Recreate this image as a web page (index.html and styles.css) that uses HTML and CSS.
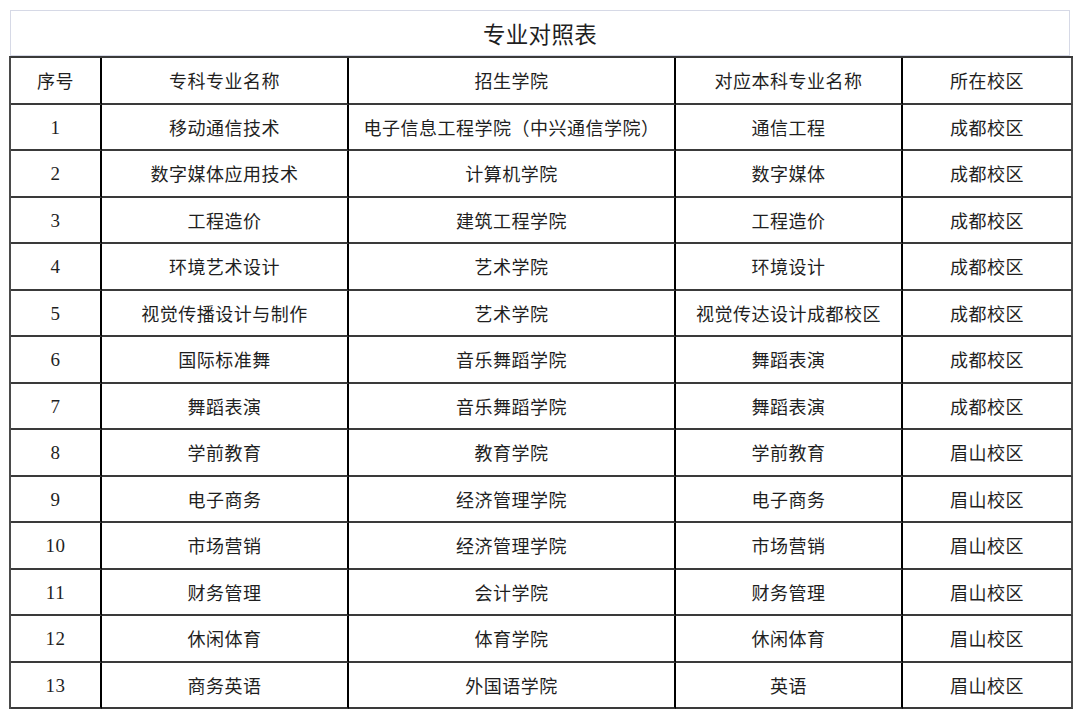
FILE: index.html
```html
<!DOCTYPE html>
<html lang="zh">
<head>
<meta charset="utf-8">
<title>专业对照表</title>
<link rel="stylesheet" href="styles.css">
</head>
<body>
<div class="sheet">
  <div class="caption">专业对照表</div>
  <table class="grid">
    <colgroup>
      <col class="c1"><col class="c2"><col class="c3"><col class="c4"><col class="c5">
    </colgroup>
    <thead>
      <tr><th>序号</th><th>专科专业名称</th><th>招生学院</th><th>对应本科专业名称</th><th>所在校区</th></tr>
    </thead>
    <tbody>
      <tr><td>1</td><td>移动通信技术</td><td>电子信息工程学院（中兴通信学院）</td><td>通信工程</td><td>成都校区</td></tr>
      <tr><td>2</td><td>数字媒体应用技术</td><td>计算机学院</td><td>数字媒体</td><td>成都校区</td></tr>
      <tr><td>3</td><td>工程造价</td><td>建筑工程学院</td><td>工程造价</td><td>成都校区</td></tr>
      <tr><td>4</td><td>环境艺术设计</td><td>艺术学院</td><td>环境设计</td><td>成都校区</td></tr>
      <tr><td>5</td><td>视觉传播设计与制作</td><td>艺术学院</td><td>视觉传达设计成都校区</td><td>成都校区</td></tr>
      <tr><td>6</td><td>国际标准舞</td><td>音乐舞蹈学院</td><td>舞蹈表演</td><td>成都校区</td></tr>
      <tr><td>7</td><td>舞蹈表演</td><td>音乐舞蹈学院</td><td>舞蹈表演</td><td>成都校区</td></tr>
      <tr><td>8</td><td>学前教育</td><td>教育学院</td><td>学前教育</td><td>眉山校区</td></tr>
      <tr><td>9</td><td>电子商务</td><td>经济管理学院</td><td>电子商务</td><td>眉山校区</td></tr>
      <tr><td>10</td><td>市场营销</td><td>经济管理学院</td><td>市场营销</td><td>眉山校区</td></tr>
      <tr><td>11</td><td>财务管理</td><td>会计学院</td><td>财务管理</td><td>眉山校区</td></tr>
      <tr><td>12</td><td>休闲体育</td><td>体育学院</td><td>休闲体育</td><td>眉山校区</td></tr>
      <tr><td>13</td><td>商务英语</td><td>外国语学院</td><td>英语</td><td>眉山校区</td></tr>
    </tbody>
  </table>
</div>
</body>
</html>
```
FILE: styles.css
```css
html, body {
  margin: 0;
  padding: 0;
  background: #ffffff;
}
body {
  font-family: "Noto Sans CJK SC", "Noto Sans", sans-serif;
  color: #1f1f1f;
}
.sheet {
  margin: 10px 0 0 9px;
  width: 1062px;
}
.caption {
  box-sizing: border-box;
  height: 46px;
  margin-left: 1px;
  width: 1060px;
  border: 1px solid #d6d9e6;
  display: flex;
  align-items: center;
  justify-content: center;
  font-size: 22.5px;
  letter-spacing: 0.3px;
}
.grid {
  width: 1062px;
  border-collapse: separate;
  border-spacing: 0;
  table-layout: fixed;
  font-size: 18px;
  letter-spacing: 0.5px;
  border-top: 2px solid #3a3a3a;
  border-left: 2px solid #4a4a4a;
}
.c1 { width: 91px; }
.c2 { width: 247px; }
.c3 { width: 327px; }
.c4 { width: 227px; }
.c5 { width: 170px; }
.grid th,
.grid td {
  box-sizing: border-box;
  height: 46.5px;
  padding: 0;
  text-align: center;
  vertical-align: middle;
  font-weight: 400;
  border-bottom: 2px solid #3a3a3a;
  border-right: 2px solid #000;
  line-height: 20px;
}
.grid th:last-child,
.grid td:last-child {
  border-right-color: #4a4a4a;
}
.grid td:first-child {
  font-family: "Liberation Serif", "DejaVu Serif", serif;
  font-size: 19px;
  padding-top: 2px;
}
```
